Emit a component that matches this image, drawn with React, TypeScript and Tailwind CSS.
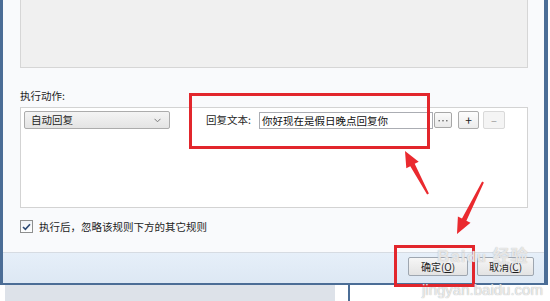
import React from 'react'

const font = { fontFamily: '"Noto Sans CJK SC", "Liberation Sans", sans-serif' }

function Arrows() {
  return (
    <svg className="absolute left-0 top-0 pointer-events-none" width="550" height="301" viewBox="0 0 550 301">
      <polygon
        fill="#ea2a2f"
        points="405,151 418.7,161.7 414.7,163.8 428.9,193.5 427.1,194.5 410.3,166.2 406.3,168.3"
      />
      <polygon
        fill="#ea2a2f"
        points="457,234 470.5,222.8 466.4,220.8 483.9,182.4 482.1,181.6 462,218.6 457.9,216.6"
      />
    </svg>
  )
}

export default function App() {
  return (
    <div className="relative w-[550px] h-[301px] bg-white overflow-hidden text-[10.5px] text-[#1e1e1e]" style={font}>
      {/* dialog window */}
      <div className="flex flex-col w-[548px] h-[285px] border-l-[3px] border-r-[4px] border-b-[2px] border-[#4b6d96]">
        <div className="flex-1 flex flex-col bg-[#f9fafc] pl-[17px] pr-[16px]">
          {/* top condition panel */}
          <div className="h-[68px] bg-[#f0f0f0] border border-t-0 border-[#d6d6d6]" />

          <div className="mt-[20px] h-[16px] leading-[16px]">执行动作:</div>

          {/* action panel */}
          <div className="mt-[3px] h-[101px] bg-white border border-[#d3d3d3] px-[3px] pt-[3px]">
            <div className="flex items-start">
              <div className="flex items-center justify-between w-[146px] h-[18px] border border-[#acacac] rounded-[2px] bg-gradient-to-b from-[#f4f4f4] to-[#e4e4e4] pl-[6px] pr-[8px]">
                <span>自动回复</span>
                <svg width="7" height="5" viewBox="0 0 7 5">
                  <path d="M0.5 0.8 L3.5 3.8 L6.5 0.8" fill="none" stroke="#7a7a7a" strokeWidth="1" />
                </svg>
              </div>
              <div className="ml-[36px] h-[18px] leading-[18px] w-[53px]">回复文本:</div>
              <div className="flex items-center w-[174px] h-[17px] mt-[1px] border border-[#abadb3] bg-white pl-[2px] text-[#111]">
                你好现在是假日晚点回复你
              </div>
              <div className="ml-[1px] mt-[1px] flex items-center justify-center w-[18px] h-[16px] border border-[#a7a7a7] rounded-[2px] bg-gradient-to-b from-[#fbfbfb] to-[#e9e9e9]">
                <svg width="10" height="3" viewBox="0 0 10 3">
                  <rect x="0.5" y="1" width="1.4" height="1.4" fill="#666" />
                  <rect x="4.3" y="1" width="1.4" height="1.4" fill="#666" />
                  <rect x="8.1" y="1" width="1.4" height="1.4" fill="#666" />
                </svg>
              </div>
              <div className="ml-[6px] flex items-center justify-center w-[21px] h-[18px] border border-[#acacac] rounded-[2px] bg-gradient-to-b from-[#fdfdfd] to-[#ececec] text-[12px] leading-none text-[#222]">
                +
              </div>
              <div className="ml-[4px] flex items-center justify-center w-[22px] h-[18px] border border-[#d9d9d9] rounded-[2px] bg-[#f4f4f4] text-[11px] leading-none text-[#999]">
                –
              </div>
            </div>
          </div>

          {/* checkbox */}
          <div className="mt-[12px] flex items-center h-[13px]">
            <div className="flex items-center justify-center w-[13px] h-[13px] border border-[#8e8f8f] bg-gradient-to-b from-[#f0f3f7] to-white">
              <svg width="9" height="8" viewBox="0 0 9 8">
                <path d="M1 4 L3.4 6.4 L8 1.2" fill="none" stroke="#2c4a75" strokeWidth="1.6" />
              </svg>
            </div>
            <span className="ml-[6px]">执行后，忽略该规则下方的其它规则</span>
          </div>
          <div className="flex-1" />
        </div>

        {/* button bar */}
        <div className="h-[31px] border-t border-[#d6dbe2] bg-gradient-to-b from-[#e6eff9] to-[#dde8f4] flex items-start justify-end pt-[4px] pr-[10px] gap-[9px]">
          <div className="flex items-center justify-center w-[60px] h-[19px] border border-[#9ea6b0] rounded-[2px] bg-gradient-to-b from-[#f6f6f6] to-[#e3e3e3] text-[10px]">
            确定(<span className="underline">O</span>)
          </div>
          <div className="flex items-center justify-center w-[57px] h-[19px] border border-[#9ea6b0] rounded-[2px] bg-gradient-to-b from-[#f6f6f6] to-[#e3e3e3] text-[10px]">
            取消(<span className="underline">C</span>)
          </div>
        </div>
      </div>

      {/* window behind */}
      <div className="flex h-[16px]">
        <div className="ml-[5px] w-[330px] bg-[#dde2e9]" />
        <div className="ml-[13px] w-[2px] bg-[#4b6d96]" />
      </div>

      {/* annotations */}
      <div className="absolute left-[189px] top-[93px] w-[241px] h-[56px] border-[3px] border-[#e2262c]" />
      <div className="absolute left-[394px] top-[245px] w-[81px] h-[42px] border-[3px] border-[#e2262c]" />
      <Arrows />

      {/* watermark */}
      <div className="absolute left-[437px] top-[246px] text-[17px] font-bold text-white/70 leading-none tracking-[1px]" style={{ fontFamily: '"Liberation Sans", sans-serif', textShadow: '0 0 1px #aaa' }}>
        Bai<span className="text-[15px]">du</span> <span style={font}>经验</span>
      </div>
      <div className="absolute left-[422px] top-[282px] text-[15px] text-white/75 leading-none" style={{ fontFamily: '"Liberation Sans", sans-serif', textShadow: '0 0 1px #999' }}>
        jingyan.baidu.com
      </div>
    </div>
  )
}
